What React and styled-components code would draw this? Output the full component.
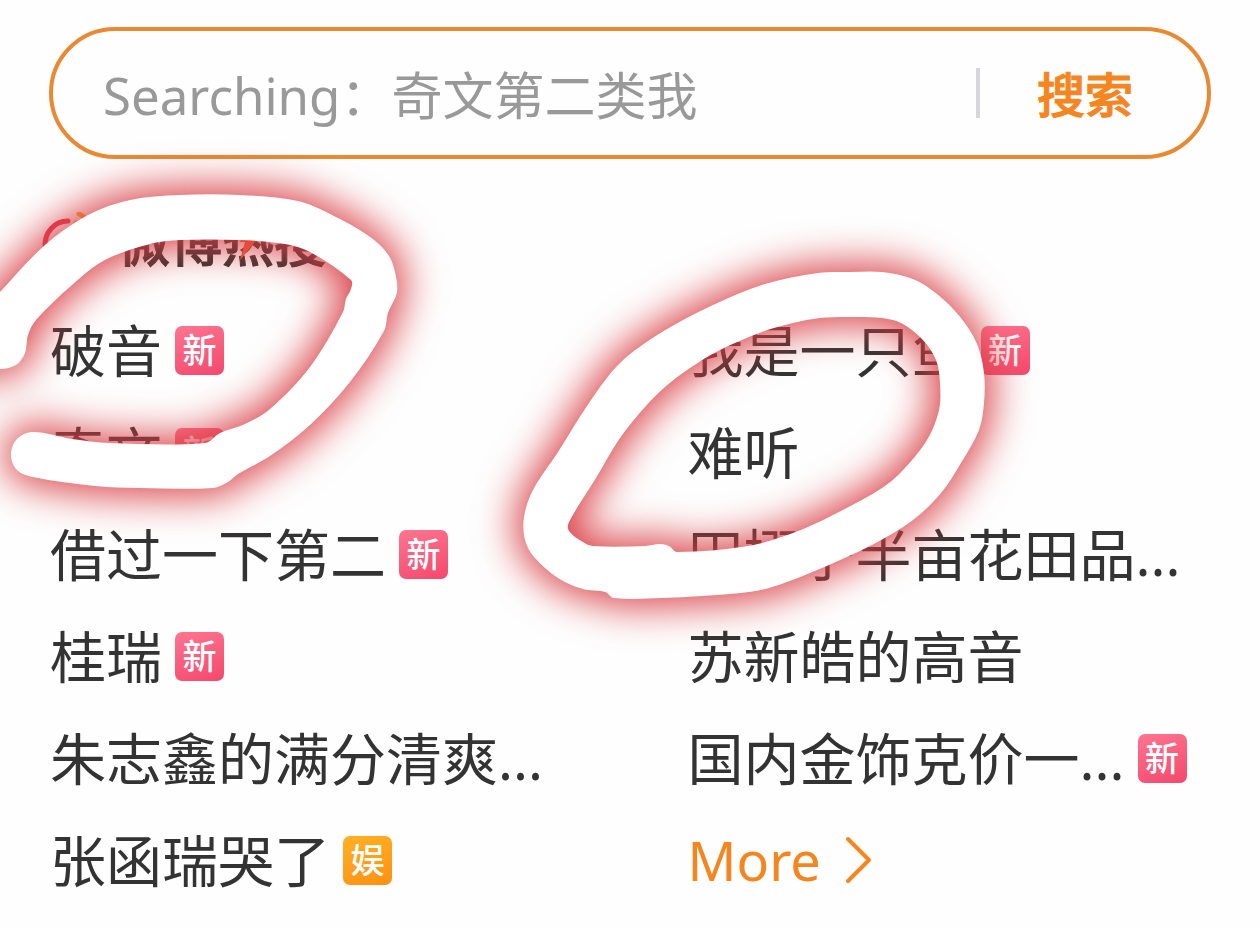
import React, { useState } from 'react';
import styled, { createGlobalStyle } from 'styled-components';

const GlobalStyle = createGlobalStyle`
  * {
    box-sizing: border-box;
  }

  body {
    margin: 0;
    background: #fefefe;
    color: #333;
    font-family: 'Noto Sans', 'Noto Sans CJK SC', sans-serif;
  }
`;

const Page = styled.main`
  position: relative;
  padding: 27px 49px 16px;
  overflow: hidden;
`;

const SearchForm = styled.form`
  display: flex;
  align-items: center;
  height: 132px;
  padding: 0 74px 0 50px;
  border: 4px solid #e98a32;
  border-radius: 66px;
`;

const SearchInput = styled.input`
  flex: 1;
  min-width: 0;
  height: 80px;
  padding: 3px 0 0;
  border: none;
  outline: none;
  background: transparent;
  color: #333;
  font-family: inherit;
  font-size: 51px;

  &::placeholder {
    color: #999;
    opacity: 1;
  }
`;

const Divider = styled.span`
  width: 4px;
  height: 50px;
  background: #d5d7dc;
`;

const SearchButton = styled.button`
  margin-left: 57px;
  padding: 4px 0 0;
  border: none;
  background: none;
  color: #f5861f;
  font-family: inherit;
  font-size: 48px;
  font-weight: 500;
  line-height: 72px;
  -webkit-text-stroke: 1px currentColor;
  cursor: pointer;
`;

const Header = styled.header`
  display: flex;
  align-items: center;
  gap: 16px;
  height: 90px;
  margin: 38px 0 12px;
`;

const Logo = styled.svg`
  width: 60px;
  height: 60px;
  margin-left: -7px;
`;

const Title = styled.h1`
  position: relative;
  margin: 0;
  color: #333;
  font-size: 52px;
  font-weight: 500;
  line-height: 60px;
  -webkit-text-stroke: 1px currentColor;
`;

const Bolt = styled.svg`
  position: absolute;
  top: 12px;
  left: 120px;
  width: 22px;
  height: 36px;
`;

const TopicList = styled.ul`
  display: grid;
  grid-template-columns: 1fr 1fr;
  grid-auto-rows: 102px;
  column-gap: 114px;
  margin: 0;
  padding: 0 0 0 1px;
  list-style: none;
`;

const Topic = styled.li`
  display: flex;
  align-items: center;
  gap: 13px;
`;

const TopicLink = styled.a`
  color: #333;
  font-size: 56px;
  line-height: 76px;
  text-decoration: none;
  white-space: nowrap;
`;

const Badge = styled.span`
  flex: none;
  width: 49px;
  height: 49px;
  border-radius: 7px;
  background: ${props => props.$kind === '娱'
    ? 'linear-gradient(160deg, #ffb125, #fd9012)'
    : 'linear-gradient(160deg, #fe7590, #f4486d)'};
  color: #fff;
  font-size: 34px;
  font-weight: 500;
  line-height: 48px;
  text-align: center;
`;

const MoreLink = styled.a`
  display: flex;
  align-items: center;
  gap: 24px;
  color: #f5861f;
  font-size: 54px;
  line-height: 76px;
  text-decoration: none;
`;

const Marks = styled.svg`
  position: absolute;
  top: 0;
  left: 0;
  width: 100%;
  pointer-events: none;
`;

const topics = [
  { text: '破音', badge: '新' },
  { text: '我是一只鱼', badge: '新' },
  { text: '奇文', badge: '新' },
  { text: '难听' },
  { text: '借过一下第二', badge: '新' },
  { text: '田栩宁半亩花田品...' },
  { text: '桂瑞', badge: '新' },
  { text: '苏新皓的高音' },
  { text: '朱志鑫的满分清爽...' },
  { text: '国内金饰克价一...', badge: '新' },
  { text: '张函瑞哭了', badge: '娱' },
];

const leftMark = [
  [-30, 325], [0, 292], [45, 245], [88, 215], [130, 200], [180, 195], [240, 195], [298, 201],
  [340, 219], [373, 239], [389, 256], [395, 272], [397, 292], [388, 313], [384, 331],
  [350, 382], [310, 425], [270, 456], [238, 474], [228, 482], [213, 488], [140, 488],
  [95, 486], [33, 477], [17, 470], [11, 455], [17, 439], [33, 432], [72, 439], [110, 443],
  [205, 443], [220, 433], [245, 424], [270, 409], [310, 367], [343, 312], [346, 299],
  [351, 289], [351, 280], [310, 252], [285, 244], [240, 240], [180, 240], [150, 244],
  [105, 260], [72, 285], [36, 320], [28, 335], [25, 353], [16, 365], [0, 369], [-30, 365],
];

const rightMarkOuter = [
  [818, 273], [850, 272], [882, 272], [913, 279], [937, 294], [961, 318], [977, 344],
  [984, 373], [984, 403], [979, 430], [961, 463], [941, 493], [913, 520], [872, 545],
  [810, 573], [769, 588], [741, 593], [662, 598], [614, 598], [605, 592], [583, 589],
  [558, 578], [534, 557], [525, 540], [524, 517], [533, 490], [558, 452], [589, 403],
  [620, 363], [662, 332], [713, 305], [765, 284],
];

const rightMarkInner = [
  [820, 318], [848, 317], [882, 318], [901, 323], [922, 339], [936, 360], [940, 383],
  [939, 410], [927, 440], [903, 470], [882, 488], [831, 516], [793, 533], [748, 546],
  [677, 552], [669, 546], [660, 544], [645, 546], [593, 546], [583, 542], [569, 531],
  [569, 522], [596, 478], [620, 438], [645, 407], [665, 387], [690, 368], [720, 350],
  [762, 332], [793, 323],
];

// Closed smooth curve through the points; handles are a third of each segment
const smooth = points => {
  const n = points.length;
  const at = i => points[(i + n) % n];
  const tangent = i => {
    const [ax, ay] = at(i - 1);
    const [bx, by] = at(i + 1);
    const length = Math.hypot(bx - ax, by - ay);
    return [(bx - ax) / length, (by - ay) / length];
  };
  const curves = points.map((p, i) => {
    const next = at(i + 1);
    const handle = Math.hypot(next[0] - p[0], next[1] - p[1]) / 3;
    const t1 = tangent(i);
    const t2 = tangent(i + 1);
    return `C${p[0] + t1[0] * handle} ${p[1] + t1[1] * handle} `
      + `${next[0] - t2[0] * handle} ${next[1] - t2[1] * handle} ${next[0]} ${next[1]}`;
  });
  return `M${points[0].join(' ')}${curves.join('')}Z`;
};

const marksPath = smooth(leftMark) + smooth(rightMarkOuter) + smooth(rightMarkInner);

const BrushMarks = () => (
  <Marks viewBox="0 0 1260 928" aria-hidden="true">
    <defs>
      <filter
        id="glow"
        filterUnits="userSpaceOnUse"
        x="-100"
        y="80"
        width="1300"
        height="640"
        colorInterpolationFilters="sRGB"
      >
        <feGaussianBlur stdDeviation="20" />
      </filter>
    </defs>
    <path
      d={marksPath}
      fill="#d93c42"
      fillRule="evenodd"
      stroke="#d93c42"
      strokeWidth="14"
      filter="url(#glow)"
    />
    <path d={marksPath} fill="#fff" fillRule="evenodd" />
  </Marks>
);

const WeiboLogo = () => (
  <Logo viewBox="0 0 60 60" fill="none" strokeLinecap="round" aria-hidden="true">
    <path d="M26 9C12 9 3 21 3 33c0 12 10 20 23 20s22-6 25-14" stroke="#e6394f" strokeWidth="5" />
    <path d="M37 2c3 1 5 3 7 5M34 11c7 1 11 6 12 12" stroke="#f5b02d" strokeWidth="5" />
    <circle cx="27" cy="33" r="9" stroke="#333" strokeWidth="5" />
  </Logo>
);

const App = () => {
  const [query, setQuery] = useState('');

  return (
    <Page>
      <GlobalStyle />
      <SearchForm role="search" onSubmit={e => e.preventDefault()}>
        <SearchInput
          type="text"
          aria-label="搜索"
          placeholder="Searching：奇文第二类我"
          value={query}
          onChange={e => setQuery(e.target.value)}
        />
        <Divider />
        <SearchButton type="submit">搜索</SearchButton>
      </SearchForm>

      <Header>
        <WeiboLogo />
        <Title>
          微博热搜
          <Bolt viewBox="0 0 22 36" aria-hidden="true">
            <path d="M8 0h10l-4 12h8L2 36l5-18H2z" fill="#f2602c" />
          </Bolt>
        </Title>
      </Header>

      <TopicList>
        {topics.map(topic => (
          <Topic key={topic.text}>
            <TopicLink href="#topic">{topic.text}</TopicLink>
            {topic.badge && <Badge $kind={topic.badge}>{topic.badge}</Badge>}
          </Topic>
        ))}
        <Topic>
          <MoreLink href="#more">
            More
            <svg width="28" height="48" viewBox="0 0 28 48" fill="none" aria-hidden="true">
              <path d="M3 3l21 21L3 45" stroke="currentColor" strokeWidth="4" strokeLinecap="round" strokeLinejoin="round" />
            </svg>
          </MoreLink>
        </Topic>
      </TopicList>

      <BrushMarks />
    </Page>
  );
};

export default App;
